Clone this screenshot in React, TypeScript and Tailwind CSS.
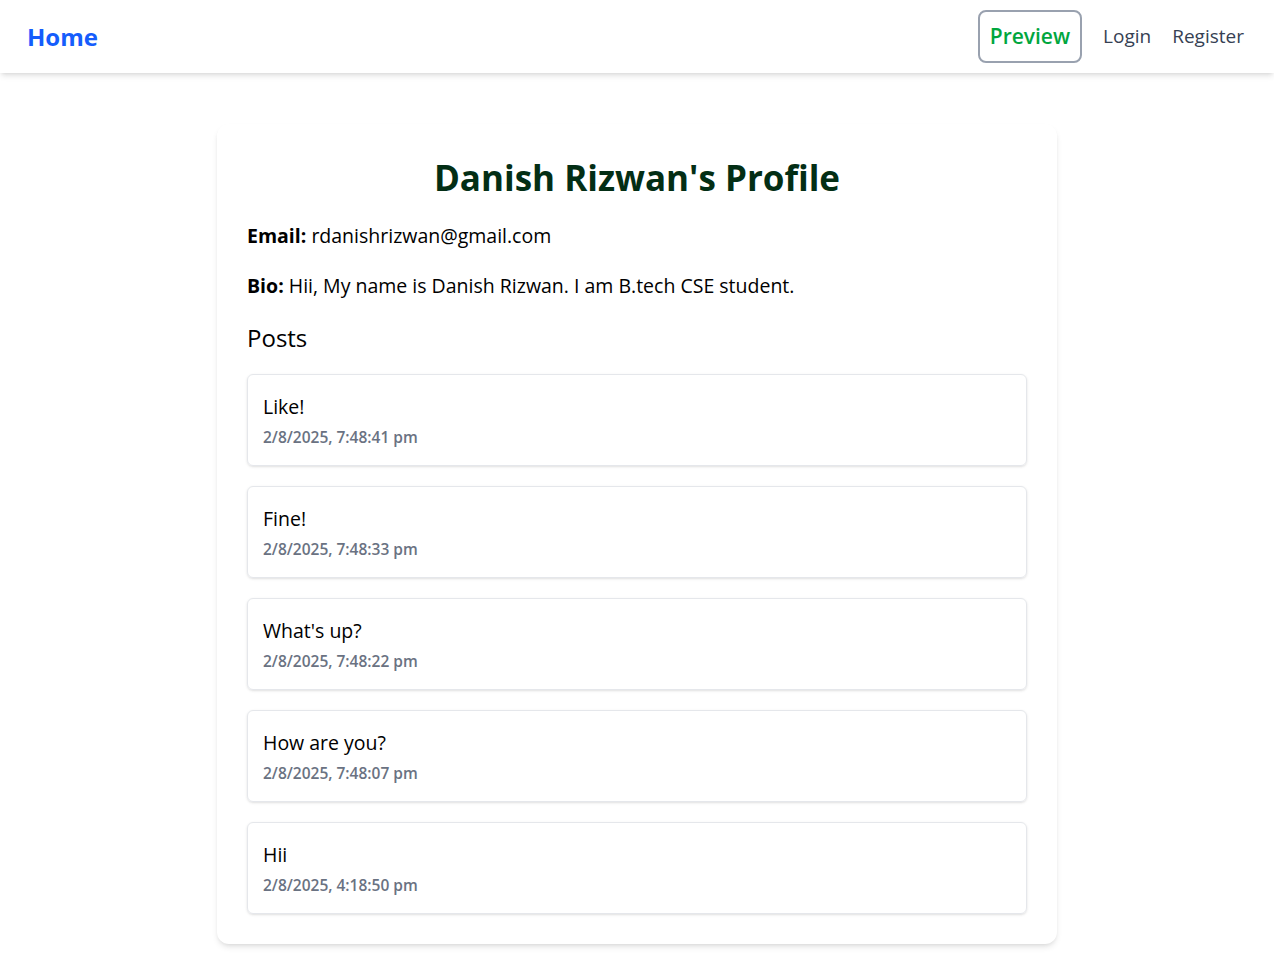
import React from "react";

const posts = [
  { id: 1, content: "Like!", createdAt: "2/8/2025, 7:48:41 pm" },
  { id: 2, content: "Fine!", createdAt: "2/8/2025, 7:48:33 pm" },
  { id: 3, content: "What's up?", createdAt: "2/8/2025, 7:48:22 pm" },
  { id: 4, content: "How are you?", createdAt: "2/8/2025, 7:48:07 pm" },
  { id: 5, content: "Hii", createdAt: "2/8/2025, 4:18:50 pm" },
];

export default function App() {
  return (
    <div
      className="min-h-screen bg-white text-black"
      style={{ fontFamily: '"Open Sans", "Noto Sans", sans-serif' }}
    >
      {/* Navbar */}
      <nav className="flex h-[73px] items-center justify-between bg-white pl-[27px] pr-[30px] shadow-md">
        <a className="text-[24px] font-bold text-blue-600">Home</a>
        <div className="flex items-center gap-[21px]">
          <button
            type="button"
            className="h-[53px] rounded-lg border-2 border-gray-400 px-[10px] text-[21px] font-semibold text-green-600"
          >
            Preview
          </button>
          <a className="text-[19px] font-medium text-gray-700">Login</a>
          <a className="text-[19px] font-medium text-gray-700">Register</a>
        </div>
      </nav>

      {/* Profile card */}
      <div className="mx-auto mt-[51px] w-[840px] rounded-xl bg-white p-[30px] shadow-md">
        <h1 className="text-center text-[35px] font-bold leading-[48px] text-green-950">
          Danish Rizwan's Profile
        </h1>
        <p className="mt-[20px] text-[19.5px] leading-[28px]">
          <strong className="font-bold">Email:</strong> rdanishrizwan@gmail.com
        </p>
        <p className="mt-[22px] text-[19.5px] leading-[28px]">
          <strong className="font-bold">Bio:</strong> Hii, My name is Danish Rizwan. I am B.tech CSE student.
        </p>
        <h2 className="mt-[22px] text-[24px] leading-[32px]">Posts</h2>

        <div className="mt-[20px] flex flex-col gap-[20px]">
          {posts.map((post) => (
            <div
              key={post.id}
              className="h-[92px] rounded-md border border-gray-200 px-[15px] py-[18px] shadow-sm"
            >
              <p className="text-[19.5px] leading-[28px]">{post.content}</p>
              <p className="mt-[5px] text-[15.5px] font-semibold text-gray-500">{post.createdAt}</p>
            </div>
          ))}
        </div>
      </div>
    </div>
  );
}
